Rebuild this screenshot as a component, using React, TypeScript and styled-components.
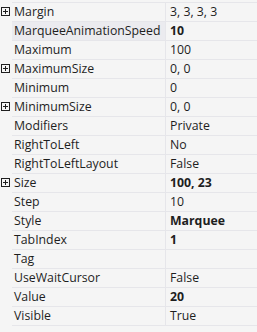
import React from 'react';
import styled, { createGlobalStyle } from 'styled-components';

const GlobalStyle = createGlobalStyle`
  html, body {
    margin: 0;
    padding: 0;
    background: #f5f5f5;
  }
  body {
    font-family: "Open Sans", "Noto Sans", sans-serif;
    font-size: 12.3px;
    color: #1e1e1e;
  }
`;

const Grid = styled.div`
  width: 257px;
  height: 332px;
  padding-top: 2px;
  box-sizing: border-box;
  overflow: hidden;
  background: #f5f5f5;
`;

const Rows = styled.div`
  border-top: 1px solid #e6e6ea;
  margin-left: 12px;
`;

const Row = styled.div`
  position: relative;
  display: flex;
  height: 19px;
  box-sizing: border-box;
  border-bottom: 1px solid #e6e6ea;
`;

const Expander = styled.span`
  position: absolute;
  left: -11px;
  top: 4px;
  width: 7px;
  height: 7px;
  border: 1px solid #1e1e1e;
  display: flex;
  align-items: center;
  justify-content: center;
  &::before,
  &::after {
    content: '';
    position: absolute;
    background: #1e1e1e;
  }
  &::before {
    width: 5px;
    height: 1px;
  }
  &::after {
    width: 1px;
    height: 5px;
  }
`;

const Name = styled.div<{ $selected?: boolean }>`
  width: 153px;
  box-sizing: border-box;
  padding-left: 2px;
  line-height: 18px;
  white-space: nowrap;
  overflow: hidden;
  background: ${(p) => (p.$selected ? '#ebebef' : 'transparent')};
`;

const Value = styled.div<{ $bold?: boolean }>`
  flex: 1;
  border-left: 1px solid #e6e6ea;
  padding-left: 4px;
  line-height: 18px;
  white-space: nowrap;
  font-weight: ${(p) => (p.$bold ? 700 : 400)};
`;

type Prop = { name: string; value: string; bold?: boolean; expand?: boolean; selected?: boolean };

const props: Prop[] = [
  { name: 'Margin', value: '3, 3, 3, 3', expand: true },
  { name: 'MarqueeAnimationSpeed', value: '10', bold: true, selected: true },
  { name: 'Maximum', value: '100' },
  { name: 'MaximumSize', value: '0, 0', expand: true },
  { name: 'Minimum', value: '0' },
  { name: 'MinimumSize', value: '0, 0', expand: true },
  { name: 'Modifiers', value: 'Private' },
  { name: 'RightToLeft', value: 'No' },
  { name: 'RightToLeftLayout', value: 'False' },
  { name: 'Size', value: '100, 23', bold: true, expand: true },
  { name: 'Step', value: '10' },
  { name: 'Style', value: 'Marquee', bold: true },
  { name: 'TabIndex', value: '1', bold: true },
  { name: 'Tag', value: '' },
  { name: 'UseWaitCursor', value: 'False' },
  { name: 'Value', value: '20', bold: true },
  { name: 'Visible', value: 'True' },
];

export default function App() {
  return (
    <>
      <GlobalStyle />
      <Grid>
        <Rows>
          {props.map((p) => (
            <Row key={p.name}>
              {p.expand && <Expander />}
              <Name $selected={p.selected}>{p.name}</Name>
              <Value $bold={p.bold}>{p.value}</Value>
            </Row>
          ))}
        </Rows>
      </Grid>
    </>
  );
}
